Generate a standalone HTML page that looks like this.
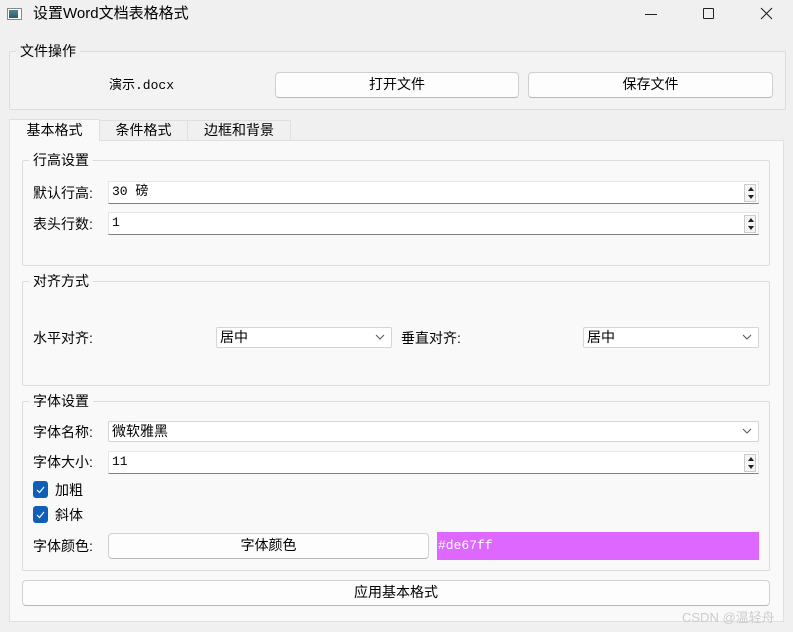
<!DOCTYPE html>
<html><head><meta charset="utf-8"><style>
*{box-sizing:border-box;margin:0;padding:0}
body{width:793px;height:632px;background:#f0f0f0;position:relative;overflow:hidden;font-family:"Liberation Sans","Noto Sans CJK SC",sans-serif;font-size:14px;color:#000}
.a{position:absolute}
.t{position:absolute;white-space:nowrap;line-height:16px}
.grp{position:absolute;border:1px solid #dcdcdc;border-radius:2px}
.gl{position:absolute;background:inherit;padding:0 4px;line-height:16px;white-space:nowrap}
.btn{position:absolute;background:#fdfdfd;border:1px solid #d0d0d0;border-bottom-color:#b8b8b8;border-radius:4px;text-align:center;line-height:22px}
.inp{position:absolute;background:#fff;border:1px solid #e5e5e5;border-bottom:1px solid #808080;line-height:20px;padding-left:3px;font-family:"Liberation Mono","Noto Sans CJK SC",monospace;font-size:13px}
.sp{position:absolute;right:2px;top:2px;width:12px;height:18px;border:1px solid #ccc;background:#f4f4f4}
.sp:before{content:"";position:absolute;left:3px;top:2px;border:3px solid transparent;border-bottom:4px solid #222;border-top:0}
.sp:after{content:"";position:absolute;left:3px;bottom:2px;border:3px solid transparent;border-top:4px solid #222;border-bottom:0}
.cb{position:absolute;background:#fff;border:1px solid #d5d5d5;border-radius:2px;line-height:19px;padding-left:3px}
.cb svg{position:absolute;right:6px;top:6px}
.chk{position:absolute;width:15px;height:17px;background:#0f5fb8;border-radius:3px}
</style></head><body>
<div class="a" style="left:0;top:0;width:793px;height:32px;background:#f0f0f0"></div>
<div class="a" style="left:7px;top:8px;width:15px;height:12px;border:1px solid #888;background:#fff"><div class="a" style="left:1px;top:1px;width:9px;height:8px;background:linear-gradient(#4a8a8a,#2a5a6a)"></div></div>
<div class="t" style="left:33px;top:6px;font-size:15px">设置Word文档表格格式</div>
<div class="a" style="left:645px;top:14px;width:12px;height:1px;background:#222"></div>
<div class="a" style="left:703px;top:8px;width:11px;height:11px;border:1px solid #222;border-radius:1px"></div>
<svg class="a" style="left:760px;top:7px" width="13" height="13"><path d="M1 1L12 12M12 1L1 12" stroke="#222" stroke-width="1.1"/></svg>
<div class="grp" style="left:9px;top:51px;width:777px;height:59px;background:#f3f3f3"></div>
<div class="gl" style="left:16px;top:43px;background:#f0f0f0">文件操作</div>
<div class="t" style="left:109px;top:78px;font-family:'Liberation Mono','Noto Sans CJK SC',monospace;font-size:13px">演示.docx</div>
<div class="btn" style="left:275px;top:72px;width:244px;height:26px">打开文件</div>
<div class="btn" style="left:528px;top:72px;width:245px;height:26px">保存文件</div>
<div class="a" style="left:9px;top:140px;width:775px;height:482px;background:#f9f9f9;border:1px solid #e0e0e0"></div>
<div class="a" style="left:9px;top:119px;width:91px;height:22px;background:#f9f9f9;border:1px solid #e0e0e0;border-bottom:none;text-align:center;line-height:20px">基本格式</div>
<div class="a" style="left:99px;top:120px;width:89px;height:20px;background:#f0f0f0;border:1px solid #e0e0e0;border-bottom:none;text-align:center;line-height:19px">条件格式</div>
<div class="a" style="left:187px;top:120px;width:104px;height:20px;background:#f0f0f0;border:1px solid #e0e0e0;border-bottom:none;text-align:center;line-height:19px">边框和背景</div>
<div class="grp" style="left:22px;top:160px;width:748px;height:106px;background:#f9f9f9"></div>
<div class="gl" style="left:29px;top:152px;background:#f9f9f9">行高设置</div>
<div class="t" style="left:33px;top:185px">默认行高:</div>
<div class="inp" style="left:108px;top:181px;width:651px;height:23px">30 磅<div class="sp"></div></div>
<div class="t" style="left:33px;top:216px">表头行数:</div>
<div class="inp" style="left:108px;top:212px;width:651px;height:23px">1<div class="sp"></div></div>
<div class="grp" style="left:22px;top:281px;width:748px;height:105px;background:#f9f9f9"></div>
<div class="gl" style="left:29px;top:273px;background:#f9f9f9">对齐方式</div>
<div class="t" style="left:33px;top:330px">水平对齐:</div>
<div class="cb" style="left:216px;top:327px;width:176px;height:21px">居中<svg width="10" height="7"><path d="M1 1L5 5L9 1" fill="none" stroke="#555"/></svg></div>
<div class="t" style="left:401px;top:330px">垂直对齐:</div>
<div class="cb" style="left:583px;top:327px;width:176px;height:21px">居中<svg width="10" height="7"><path d="M1 1L5 5L9 1" fill="none" stroke="#555"/></svg></div>
<div class="grp" style="left:22px;top:401px;width:748px;height:170px;background:#f9f9f9"></div>
<div class="gl" style="left:29px;top:393px;background:#f9f9f9">字体设置</div>
<div class="t" style="left:33px;top:424px">字体名称:</div>
<div class="cb" style="left:108px;top:421px;width:651px;height:21px">微软雅黑<svg width="10" height="7"><path d="M1 1L5 5L9 1" fill="none" stroke="#555"/></svg></div>
<div class="t" style="left:33px;top:454px">字体大小:</div>
<div class="inp" style="left:108px;top:451px;width:651px;height:23px">11<div class="sp"></div></div>
<div class="chk" style="left:33px;top:481px"><svg width="15" height="17"><path d="M4 9L6.5 11.5L11 6" fill="none" stroke="#fff" stroke-width="1.2"/></svg></div>
<div class="t" style="left:55px;top:482px">加粗</div>
<div class="chk" style="left:33px;top:506px"><svg width="15" height="17"><path d="M4 9L6.5 11.5L11 6" fill="none" stroke="#fff" stroke-width="1.2"/></svg></div>
<div class="t" style="left:55px;top:507px">斜体</div>
<div class="t" style="left:33px;top:538px">字体颜色:</div>
<div class="btn" style="left:108px;top:533px;width:321px;height:26px">字体颜色</div>
<div class="a" style="left:437px;top:532px;width:322px;height:28px;background:#de67ff;color:#fff;font-family:'Liberation Mono',monospace;font-size:13px;line-height:28px;padding-left:1px">#de67ff</div>
<div class="btn" style="left:22px;top:580px;width:748px;height:26px">应用基本格式</div>
<div class="t" style="left:682px;top:610px;color:#ccc;font-size:13px">CSDN @温轻舟</div>
</body></html>
